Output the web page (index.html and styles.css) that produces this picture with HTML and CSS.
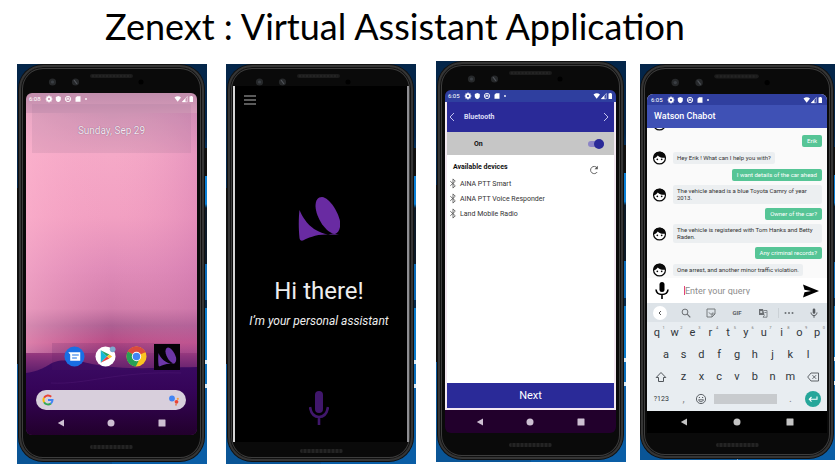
FILE: index.html
```html
<!DOCTYPE html>
<html lang="en">
<head>
<meta charset="utf-8">
<meta name="viewport" content="width=device-width, initial-scale=1">
<title>Zenext : Virtual Assistant Application</title>
<link rel="stylesheet" href="styles.css">
</head>
<body>
<svg class="defs" width="0" height="0" aria-hidden="true">
  <symbol id="notif" viewBox="0 0 44 8">
    <g fill="#fff">
      <circle cx="4" cy="4" r="1.900" fill="none" stroke="#fff" stroke-width="1.600"/>
      <path d="M4 .6v1.400M4 6v1.400M.6 4h1.400M6 4h1.400M1.600 1.600l1 1M5.400 5.400l1 1M6.400 1.600l-1 1M2.600 5.400l-1 1" stroke="#fff" stroke-width="1.100"/>
      <path d="M13.300 1l2.500 1v2.400c0 1.200-1 2-2.500 2.700-1.500-.7-2.500-1.500-2.500-2.700V2z"/>
      <circle cx="23" cy="4" r="2.700" fill="none" stroke="#fff" stroke-width=".9"/>
      <path d="M21.500 5.500l1.500-3 1.500 3M21 4h3.500" fill="none" stroke="#fff" stroke-width=".7"/>
      <path d="M32 1.200h3.500v5.600h-5V2.800z"/>
      <circle cx="41" cy="4" r=".9"/>
    </g>
  </symbol>
  <symbol id="signal" viewBox="0 0 20 8">
    <path d="M.5 2.500C2.500.9 5 .9 7 2.500L3.700 6.800z" fill="#fff"/>
    <path d="M11.500 3.200V7H8z" fill="#fff"/><path d="M13.300 1.500v5.300H8.300z" fill="none" stroke="#fff" stroke-width=".5"/>
    <path d="M15.500 1.500h1V1h1.500v.5h1V7h-3.500z" fill="#fff"/>
  </symbol>
  <symbol id="bezel" viewBox="0 0 171 26">
    <circle cx="26.500" cy="15" r="3.600" fill="#26282a"/><circle cx="26.500" cy="15" r="1.600" fill="#3b3f44"/>
    <circle cx="49.500" cy="15" r="3.600" fill="#26282a"/><path d="M48 13l3 4" stroke="#50545a" stroke-width="1.200"/>
    <rect x="64" y="7" width="43" height="4" rx="2" fill="#1c1c1c"/>
    <path d="M66 9h39" stroke="#242424" stroke-width="2" stroke-dasharray="2 1.500"/>
    <circle cx="115" cy="15" r="2.500" fill="#000"/>
  </symbol>
  <symbol id="logo" viewBox="0 0 42 46">
    <path d="M1.500 14C5 22 12 35 30 38.500 18 38 10 42 5 44.500 3 45 1.700 44 1.500 42 .5 33 .5 22 1.500 14z" fill="currentColor"/>
    <path d="M17.500 10C17.500 4 20 1 24 1c8 1 16 15 18 24 1 6-1 12-5 13C28 37 18 22 17.500 10z" fill="currentColor"/>
    <path d="M30 38.500l11 .2-6-1.200z" fill="currentColor"/>
  </symbol>
  <symbol id="mic" viewBox="0 0 20 36">
    <rect x="6" y="1" width="8" height="22" rx="4" fill="currentColor"/>
    <path d="M1 17c1 7 4 10 9 10s8-3 9-10M10 27v8" fill="none" stroke="currentColor" stroke-width="2.600"/>
  </symbol>
  <symbol id="back" viewBox="0 0 8 8"><path d="M7 .5v7L.8 4z" fill="currentColor"/></symbol>
  <symbol id="home" viewBox="0 0 8 8"><circle cx="4" cy="4" r="3.500" fill="currentColor"/></symbol>
  <symbol id="recent" viewBox="0 0 8 8"><rect x=".5" y=".5" width="7" height="7" rx=".5" fill="currentColor"/></symbol>
  <symbol id="bt" viewBox="0 0 8 12"><path d="M1 3.500l5.500 5L4 11V1l2.500 2.500L1 8.500" fill="none" stroke="#555" stroke-width=".9"/></symbol>
  <symbol id="face" viewBox="0 0 16 16">
    <circle cx="8" cy="8" r="6.800" fill="#fff" stroke="#0a0a0a" stroke-width="1.400"/>
    <path d="M1.200 8.500C3 8 5 6.800 6 5c2 2.300 5 3.200 8.800 2.600C15 3.500 12 .8 8 .8S1 4 1.200 8.500z" fill="#0a0a0a"/>
    <circle cx="5.500" cy="9.500" r="1" fill="#0a0a0a"/><circle cx="10.500" cy="9.500" r="1" fill="#0a0a0a"/>
  </symbol>
</svg>

<header class="title"><h1>Zenext : Virtual Assistant Application</h1></header>

<main class="phones">
  <section class="stage stage-home">
    <div class="phone">
      <svg class="bezel" preserveAspectRatio="xMinYMin"><use href="#bezel" width="171" height="26"/></svg>
      <div class="screen home">
        <svg class="wallpaper" viewBox="0 0 171 342" preserveAspectRatio="none" aria-hidden="true">
          <defs>
            <linearGradient id="sky" x1="0" y1="0" x2="0" y2="1">
              <stop offset="0" stop-color="#c18eac"/><stop offset=".07" stop-color="#dc9dbd"/><stop offset=".18" stop-color="#f5a9c7"/><stop offset=".36" stop-color="#f2a0c2"/>
              <stop offset=".52" stop-color="#df8bb8"/><stop offset=".63" stop-color="#d17daa"/><stop offset=".68" stop-color="#ac5f92"/><stop offset=".73" stop-color="#bb4b86"/><stop offset=".77" stop-color="#8c347c"/><stop offset=".82" stop-color="#5b1d6b"/>
            </linearGradient>
            <linearGradient id="glow" x1="0" y1="0" x2="1" y2="0">
              <stop offset="0" stop-color="#ffb7d0" stop-opacity=".5"/><stop offset=".5" stop-color="#f5a0c4" stop-opacity="0"/><stop offset="1" stop-color="#c467a8" stop-opacity=".3"/>
            </linearGradient>
            <linearGradient id="hill" x1="0" y1="0" x2="0" y2="1">
              <stop offset="0" stop-color="#3b0b64"/><stop offset=".4" stop-color="#350458"/><stop offset="1" stop-color="#22002c"/>
            </linearGradient>
          </defs>
          <path d="M0 0h171v342H0z" fill="url(#sky)"/>
          <path d="M0 20h171v240H0z" fill="url(#glow)"/>
          <path d="M0 280C20 277 22 270 32 268 50 266 55 269 66 271c30 6 60 4 105 3v68H0z" fill="url(#hill)"/>
          <path d="M25 290c35 2 65-12 130-10" fill="none" stroke="#4d1871" stroke-opacity=".5"/>
        </svg>
        <div class="status"><span class="time">6:08</span><svg class="notif"><use href="#notif"/></svg><svg class="signal"><use href="#signal"/></svg></div>
        <div class="date">Sunday, Sep 29</div>
        <div class="dock">
          <button class="app" aria-label="Messages"><svg viewBox="0 0 22 22"><circle cx="11" cy="11" r="10.500" fill="#1a6fe4"/><path d="M4.500 6.500H17v9H6.500V9z" fill="#fff"/><path d="M8.500 9.500h7M8.500 12.500h5" stroke="#1a6fe4" stroke-width="1.100"/></svg></button>
          <button class="app" aria-label="Play Store"><svg viewBox="0 0 22 22"><circle cx="11" cy="11" r="10.500" fill="#fff"/><path d="M6 4.500v13l6.500-6.500z" fill="#14b8d8"/><path d="M6 4.500l9 4.500-2.500 2z" fill="#22a565"/><path d="M6 17.500l9-4.500-2.500-2z" fill="#e8413c"/><path d="M15 9l3 2-3 2-2.500-2z" fill="#fbc02d"/><circle cx="18.500" cy="3.500" r="3" fill="#7fa8cf"/></svg></button>
          <button class="app" aria-label="Chrome"><svg viewBox="0 0 22 22"><circle cx="11" cy="11" r="10.500" fill="#fbc421"/><path d="M11 11L1.900 5.800A10.500 10.500 0 0 1 20.300 6.200z" fill="#db4a3c"/><path d="M11 11L1.900 5.800A10.500 10.500 0 0 0 10.200 21.500L14 14z" fill="#27a056"/><path d="M11 6.200h9.300" stroke="#db4a3c"/><circle cx="11" cy="11" r="4.900" fill="#fff"/><circle cx="11" cy="11" r="3.900" fill="#4285f4"/></svg></button>
          <button class="app zenext" aria-label="Zenext"><svg><use href="#logo"/></svg></button>
        </div>
        <div class="search">
          <svg viewBox="0 0 12 12"><g fill="none" stroke-width="2"><path d="M9.200 2.800A4.500 4.500 0 0 0 2.100 3.800" stroke="#ea4335"/><path d="M2.100 3.800a4.500 4.500 0 0 0 0 4.400" stroke="#fbbc05"/><path d="M2.100 8.200a4.500 4.500 0 0 0 6.800 1.200" stroke="#34a853"/><path d="M8.900 9.400A4.500 4.500 0 0 0 10.500 6H6" stroke="#4285f4"/></g></svg>
          <input type="text" aria-label="Search">
          <svg viewBox="0 0 12 12"><circle cx="4" cy="4.500" r="2.900" fill="#4285f4"/><circle cx="8.500" cy="7.800" r="1.900" fill="#ea4335"/><circle cx="9.800" cy="4.800" r="1.100" fill="#fa9d3c"/><circle cx="8" cy="10.800" r="1" fill="#de8a64"/></svg>
        </div>
        <nav class="nav"><button aria-label="Back"><svg><use href="#back"/></svg></button><button aria-label="Home"><svg><use href="#home"/></svg></button><button aria-label="Recent"><svg><use href="#recent"/></svg></button></nav>
      </div>
      <div class="chin"></div>
    </div>
  </section>

  <section class="stage stage-hello">
    <div class="phone">
      <svg class="bezel" preserveAspectRatio="xMinYMin"><use href="#bezel" width="171" height="26"/></svg>
      <div class="screen hello">
        <button class="menu" aria-label="Menu"><svg viewBox="0 0 12 10"><path d="M0 1h12M0 5h12M0 9h12" stroke="#b4b4b4" stroke-width="1"/></svg></button>
        <svg class="brand"><use href="#logo"/></svg>
        <h2>Hi there!</h2>
        <p>I’m your personal assistant</p>
        <button class="talk" aria-label="Speak"><svg><use href="#mic"/></svg></button>
      </div>
      <div class="chin"></div>
    </div>
  </section>

  <section class="stage stage-bt">
    <div class="phone">
      <svg class="bezel" preserveAspectRatio="xMinYMin"><use href="#bezel" width="171" height="26"/></svg>
      <div class="screen bluetooth">
        <div class="status"><span class="time">6:05</span><svg class="notif"><use href="#notif"/></svg><svg class="signal"><use href="#signal"/></svg></div>
        <div class="app-body">
          <div class="bt-bar"><button aria-label="Previous"><svg viewBox="0 0 6 10"><path d="M5 1L1 5l4 4" fill="none" stroke="#c3c3ee"/></svg></button><h2>Bluetooth</h2><button aria-label="Next page"><svg viewBox="0 0 6 10"><path d="M1 1l4 4-4 4" fill="none" stroke="#c3c3ee"/></svg></button></div>
          <div class="bt-on"><label for="power">On</label><input id="power" type="checkbox" checked></div>
          <div class="bt-head"><h3>Available devices</h3><button aria-label="Refresh"><svg viewBox="0 0 10 10"><path d="M8.200 7A3.600 3.600 0 1 1 8 2.800" fill="none" stroke="#555" stroke-width=".9"/><path d="M8.800.8v3.400H5.500z" fill="#555"/></svg></button></div>
          <ul class="devices">
            <li><svg><use href="#bt"/></svg>AINA PTT Smart</li>
            <li><svg><use href="#bt"/></svg>AINA PTT Voice Responder</li>
            <li><svg><use href="#bt"/></svg>Land Mobile Radio</li>
          </ul>
          <button class="next">Next</button>
        </div>
        <nav class="nav"><button aria-label="Back"><svg><use href="#back"/></svg></button><button aria-label="Home"><svg><use href="#home"/></svg></button><button aria-label="Recent"><svg><use href="#recent"/></svg></button></nav>
      </div>
      <div class="chin"></div>
    </div>
  </section>

  <section class="stage stage-chat">
    <div class="phone">
      <svg class="bezel" preserveAspectRatio="xMinYMin"><use href="#bezel" width="179" height="27"/></svg>
      <div class="screen chat">
        <div class="status"><span class="time">6:05</span><svg class="notif"><use href="#notif"/></svg><svg class="signal"><use href="#signal"/></svg></div>
        <h2 class="chat-bar">Watson Chabot</h2>
        <div class="messages">
          <div class="bot cut"><svg><use href="#face"/></svg></div>
          <p class="me">Erik</p>
          <div class="bot"><svg><use href="#face"/></svg><p>Hey Erik ! What can I help you with?</p></div>
          <p class="me">I want details of the car ahead</p>
          <div class="bot"><svg><use href="#face"/></svg><p>The vehicle ahead is a blue Toyota Camry of year 2013.</p></div>
          <p class="me">Owner of the car?</p>
          <div class="bot"><svg><use href="#face"/></svg><p>The vehicle is registered with Tom Hanks and Betty Raden.</p></div>
          <p class="me">Any criminal records?</p>
          <div class="bot"><svg><use href="#face"/></svg><p>One arrest, and another minor traffic violation.</p></div>
        </div>
        <div class="compose">
          <button aria-label="Record"><svg viewBox="0 0 14 17"><rect x="4.500" y="0" width="5" height="10" rx="2.500"/><path d="M1 7.500c.3 3.300 2.500 5 6 5s5.700-1.700 6-5M7 12.500V17" fill="none" stroke="#000" stroke-width="1.600"/></svg></button>
          <input type="text" aria-label="Query" placeholder="Enter your query">
          <button aria-label="Send"><svg class="send" viewBox="0 0 16 14"><path d="M0 .5L16 7 0 13.500l1.500-5.300L8 7 1.500 5.800z"/></svg></button>
        </div>
        <div class="keyboard">
          <div class="tools">
            <button class="collapse" aria-label="Collapse"><svg viewBox="0 0 10 10"><path d="M6 3L4 5l2 2" fill="none" stroke="#555"/></svg></button>
            <button aria-label="Search"><svg viewBox="0 0 10 10"><path d="M6.200 6.200L9.300 9.300" stroke="#6b6f73" stroke-width="1.200"/><circle cx="4" cy="4" r="2.900" fill="none" stroke="#6b6f73"/></svg></button>
            <button aria-label="Stickers"><svg viewBox="0 0 10 10" fill="none" stroke="#6b6f73" stroke-width=".9"><path d="M1 1h8v5L6 9H1zM9 6H6v3"/><path d="M3 4.500c1 2 3 2 4 0"/></svg></button>
            <button class="gif">GIF</button>
            <button aria-label="Translate"><svg viewBox="0 0 10 10"><path d="M1 1h4l1.500 6H1z" fill="#6b6f73"/><path d="M5.500 2.500H9v6.700H5l1.500-2M6.500 4.500h2" fill="none" stroke="#6b6f73" stroke-width=".8"/><path d="M2.200 3h2v2h-2z" fill="#cfd4d8"/></svg></button>
            <button class="more" aria-label="More"><svg viewBox="0 0 10 10" fill="#6b6f73"><circle cx="1.500" cy="5" r="1"/><circle cx="5" cy="5" r="1"/><circle cx="8.500" cy="5" r="1"/></svg></button>
            <button aria-label="Voice input"><svg viewBox="0 0 10 10"><rect x="3.700" y=".5" width="2.600" height="5.300" rx="1.300" fill="#55595d"/><path d="M2 4.500c.2 2 1.300 3 3 3s2.800-1 3-3M5 7.500v2.300" fill="none" stroke="#55595d"/></svg></button>
          </div>
          <div class="keys"><button>q<sup>1</sup></button><button>w<sup>2</sup></button><button>e<sup>3</sup></button><button>r<sup>4</sup></button><button>t<sup>5</sup></button><button>y<sup>6</sup></button><button>u<sup>7</sup></button><button>i<sup>8</sup></button><button>o<sup>9</sup></button><button>p<sup>0</sup></button></div>
          <div class="keys keys-mid"><button>a</button><button>s</button><button>d</button><button>f</button><button>g</button><button>h</button><button>j</button><button>k</button><button>l</button></div>
          <div class="keys"><button class="wide" aria-label="Shift"><svg viewBox="0 0 12 12"><path d="M6 1.500l4.800 5H8.500v4h-5v-4H1.200z" fill="none" stroke="#50555a"/></svg></button><button>z</button><button>x</button><button>c</button><button>v</button><button>b</button><button>n</button><button>m</button><button class="wide" aria-label="Delete"><svg viewBox="0 0 12 12"><path d="M4 2h7.500v8H4L.7 6zM5.500 4.200l3.600 3.600M9.100 4.200L5.500 7.800" fill="none" stroke="#50555a" stroke-width=".9"/></svg></button></div>
          <div class="keys"><button class="wide symbols">?123</button><button class="faint">,</button><button aria-label="Emoji"><svg viewBox="0 0 12 12" fill="none" stroke="#50555a" stroke-width=".9"><circle cx="6" cy="6" r="4.600"/><path d="M3.500 6.800c1 2.500 4 2.500 5 0z"/><path d="M4.400 4v1M7.600 4v1" stroke-width="1.100"/></svg></button><button class="space" aria-label="Space"></button><button class="faint">.</button><button class="wide enter" aria-label="Enter"><svg viewBox="0 0 16 16"><circle cx="8" cy="8" r="8" fill="#26a69a"/><path d="M12 5.500V8.300H4.500M6.500 6l-2.200 2.300 2.200 2.300" fill="none" stroke="#fff" stroke-width="1.100"/></svg></button></div>
        </div>
        <nav class="nav"><button aria-label="Back"><svg><use href="#back"/></svg></button><button aria-label="Home"><svg><use href="#home"/></svg></button><button aria-label="Recent"><svg><use href="#recent"/></svg></button></nav>
      </div>
      <div class="chin"></div>
    </div>
  </section>
</main>
</body>
</html>
```
FILE: styles.css
```css
* { box-sizing: border-box; }
body { margin: 0; background: #fff; font-family: Roboto, "Liberation Sans", sans-serif; color: #222; }
h1, h2, h3, p, ul { margin: 0; padding: 0; font-weight: 400; }
button { margin: 0; padding: 0; border: 0; background: none; color: inherit; font: inherit; }
input { margin: 0; padding: 0; border: 0; background: none; font: inherit; min-width: 0; }
svg { display: block; flex: none; }
.defs { position: absolute; }

.title { height: 61px; padding: 3px 50px 0 0; text-align: center; }
.title h1 { font: 400 36px/46px Lato, sans-serif; color: #000; white-space: nowrap; }

.phones { display: grid; grid-template-columns: minmax(0, 195fr) minmax(0, 196fr) minmax(0, 190fr) minmax(0, 195fr); gap: 14px; align-items: start; padding: 0 5px 5px 17px; }
.stage {
  margin-top: 3px; padding: 1px 3px 3px 2px;
  background:
    linear-gradient(#04264a 0 18%, #05305c 21%, #111 21% 28%, #0a7fd6 28% 35%, #0d1b29 36% 50%, #0a6ab8 50% 59%, #062c50 59% 61%, #0a7bcb 61% 74%, #d8ecfa 74% 75%, #0b6fbc 75% 80%, #d8ecfa 80% 81%, #0a5ea6 81%) right / 50% 100% no-repeat,
    linear-gradient(#04264a 0 31%, #111 31% 75%, #0a5596 75%) left / 50% 100% no-repeat;
}
.stage-home { margin-right: 5px; }
.stage-hello { margin-right: 6px; }
.stage-bt { margin-top: 0; }
.stage-chat { padding: 1px 2px 2px 1px; }

.phone { padding: 0 5px; border: 2px solid #353535; border-radius: 24px; background: #0a0a0a; box-shadow: inset 0 0 0 1px #111, inset 0 0 0 2px #3d3d3d, 0 0 0 1px #111; overflow: hidden; }
.bezel { width: 100%; height: 26px; }
.chin { display: grid; place-items: center; height: 24px; }
.chin::before { content: ""; width: 43px; height: 4px; border-radius: 2px; background: repeating-linear-gradient(90deg, #242424 0 2px, #191919 2px 4px); }
.screen { position: relative; display: flex; flex-direction: column; overflow: hidden; border-radius: 6px; }

.status { position: relative; display: flex; align-items: center; height: 11px; padding: 0 3px; color: #fff; font-size: 6px; line-height: 8px; }
.time { width: 16px; }
.notif { width: 44px; height: 8px; }
.signal { width: 20px; height: 8px; margin-left: auto; }
.nav { position: relative; display: flex; justify-content: space-around; align-items: center; height: 23px; padding: 0 10px; color: #cdbfd2; }
.nav svg { width: 8px; height: 8px; }

/* Home screen */
.home { min-height: 342px; }
.wallpaper { position: absolute; inset: 0; width: 100%; height: 100%; }
.date { position: relative; display: grid; place-items: center; height: 49px; margin: 0 6px; padding-top: 3px; background: rgba(150, 110, 140, .16); color: #f7e9f3; font-size: 10px; text-shadow: 0 0 1px #6b4a66; }
.dock { position: relative; display: flex; align-items: center; gap: 10px; height: 27px; margin: auto 17px 20px 26px; padding-left: 12px; background: rgba(90, 30, 100, .16); }
.app svg { width: 21px; height: 21px; }
.app.zenext { padding: 3px; margin-left: -3px; background: #060208; color: #6d36a8; }
.zenext svg { width: 20px; height: 20px; }
.search { position: relative; display: flex; align-items: center; height: 20px; margin: 0 11px 0 10px; padding: 0 6px; border-radius: 10px; background: #d8cfdc; }
.search input { flex: 1; }
.search svg { width: 12px; height: 12px; }
.home .nav { height: 25px; }

/* Greeting screen */
.stage-hello .phone { padding: 0 2px 0 3px; }
.stage-hello .bezel { height: 19px; }
.stage-hello .chin { height: 17px; }
.hello { align-items: center; height: 356px; padding-right: 4px; border-radius: 0; border-left: 2px solid #d6d6d6; border-right: 2px solid #8e8e92; background: #000; color: #eee; }
.menu { align-self: flex-start; margin: 9px 0 0 9px; }
.menu svg { width: 12px; height: 10px; }
.brand { width: 42px; height: 46px; margin: 91px 0 34px; color: #692ba2; }
.hello h2 { font-size: 24px; line-height: 30px; }
.hello p { margin-top: 7px; font-size: 12px; line-height: 16px; font-style: italic; white-space: nowrap; }
.talk { margin-top: 61px; color: #40176b; }
.talk svg { width: 20px; height: 36px; }

/* Bluetooth screen */
.bluetooth { min-height: 343px; background: #22002c; }
.bluetooth .status { height: 12px; background: #2f3f9f; }
.app-body { display: flex; flex-direction: column; flex: 1; border: solid #f3e8f1; border-width: 0 2px 2px; background: #fff; }
.bt-bar { display: flex; align-items: center; height: 30px; padding: 0 5px 0 2px; background: #2a2a98; color: #dcdcf6; }
.bt-bar svg { width: 6px; height: 10px; }
.bt-bar h2 { flex: 1; margin-left: 9px; font-size: 7px; font-weight: 700; }
.bt-on { display: flex; align-items: center; justify-content: space-between; height: 23px; padding: 0 10px 0 27px; background: #c6c6c6; color: #111; font-size: 7px; font-weight: 700; }
.bt-on input { display: flex; justify-content: flex-end; align-items: center; width: 16px; height: 6px; border-radius: 3px; background: #8b84c6; appearance: none; }
.bt-on input::before { content: ""; width: 10px; height: 10px; border-radius: 50%; background: #2a2a98; }
.bt-head { display: flex; justify-content: space-between; height: 21px; padding: 7px 15px 0 6px; color: #111; }
.bt-head h3 { font-size: 7px; line-height: 10px; font-weight: 700; }
.bt-head svg { width: 10px; height: 10px; margin-top: 2px; }
.devices { list-style: none; color: #333; font-size: 7px; }
.devices li { display: flex; align-items: center; gap: 3px; height: 15px; padding-left: 2px; }
.devices svg { width: 8px; height: 11px; }
.next { height: 25px; margin-top: auto; background: #2a2a98; color: #fff; font-size: 11px; }

/* Chat screen */
.stage-chat .phone { padding: 0 4px; }
.stage-chat .bezel { height: 27px; }
.chat { border-radius: 6px 6px 0 0; background: #fafafa; }
.chat .status { background: #303f9f; padding: 0 4px; }
.chat-bar { padding: 0 7px; background: #3f51b5; color: #fff; font-size: 9px; line-height: 23px; font-weight: 500; }
.messages { display: flex; flex-direction: column; gap: 4px; padding: 0 5px 1px; font-size: 6px; line-height: 7px; }
.me { align-self: flex-end; padding: 2px 5px 3px; border-radius: 2px; background: #56c596; color: #fff; }
.bot { display: flex; align-items: center; gap: 6px; color: #333; }
.bot svg { width: 15px; height: 14px; }
.bot p { padding: 2px 4px 3px; border-radius: 2px; background: #eceff1; }
.bot.cut { align-items: flex-end; height: 3px; overflow: hidden; }
.compose { display: flex; align-items: center; height: 25px; padding: 0 8px; background: #fff; }
.compose svg { width: 14px; height: 17px; }
.compose .send { width: 16px; height: 14px; }
.compose input { flex: 1; height: 9px; margin: 0 15px; border-left: 1px solid #e0417f; font-size: 9px; line-height: 9px; }
.compose input::placeholder { color: #8d8d8d; opacity: 1; }
.keyboard { padding-bottom: 1px; background: #e8edf1; color: #30363b; }
.tools { display: grid; grid-template-columns: repeat(7, 1fr); place-items: center; height: 19px; background: #dde3e8; }
.tools svg { width: 10px; height: 10px; }
.collapse { padding: 2px; border-radius: 50%; background: #fff; }
.gif { font-size: 6px; font-weight: 700; color: #5b6065; }
.more { padding: 0 5px; border-left: 1px solid #cbd1d6; }
.keys { display: grid; grid-template-columns: repeat(20, minmax(0, 1fr)); align-items: center; height: 22px; padding: 0 1px; font-size: 11px; line-height: 14px; }
.keys button { position: relative; grid-column: span 2; display: grid; place-items: center; }
.keys .wide { grid-column: span 3; }
.keys sup { position: absolute; top: 0; right: 1px; font-size: 4px; line-height: 4px; color: #777; }
.keys-mid { grid-template-columns: repeat(18, minmax(0, 1fr)); padding: 0 10px; }
.keys svg { width: 12px; height: 12px; }
.keys .symbols { font-size: 7px; }
.keys .faint { color: #888; }
.keys .space { grid-column: span 8; height: 10px; margin: 0 4px; background: #c8cbce; }
.keys .enter svg { width: 16px; height: 16px; }
.chat .nav { height: 22px; background: #000; color: #c4c4c4; }
.stage-chat .chin { height: 23px; }
```
